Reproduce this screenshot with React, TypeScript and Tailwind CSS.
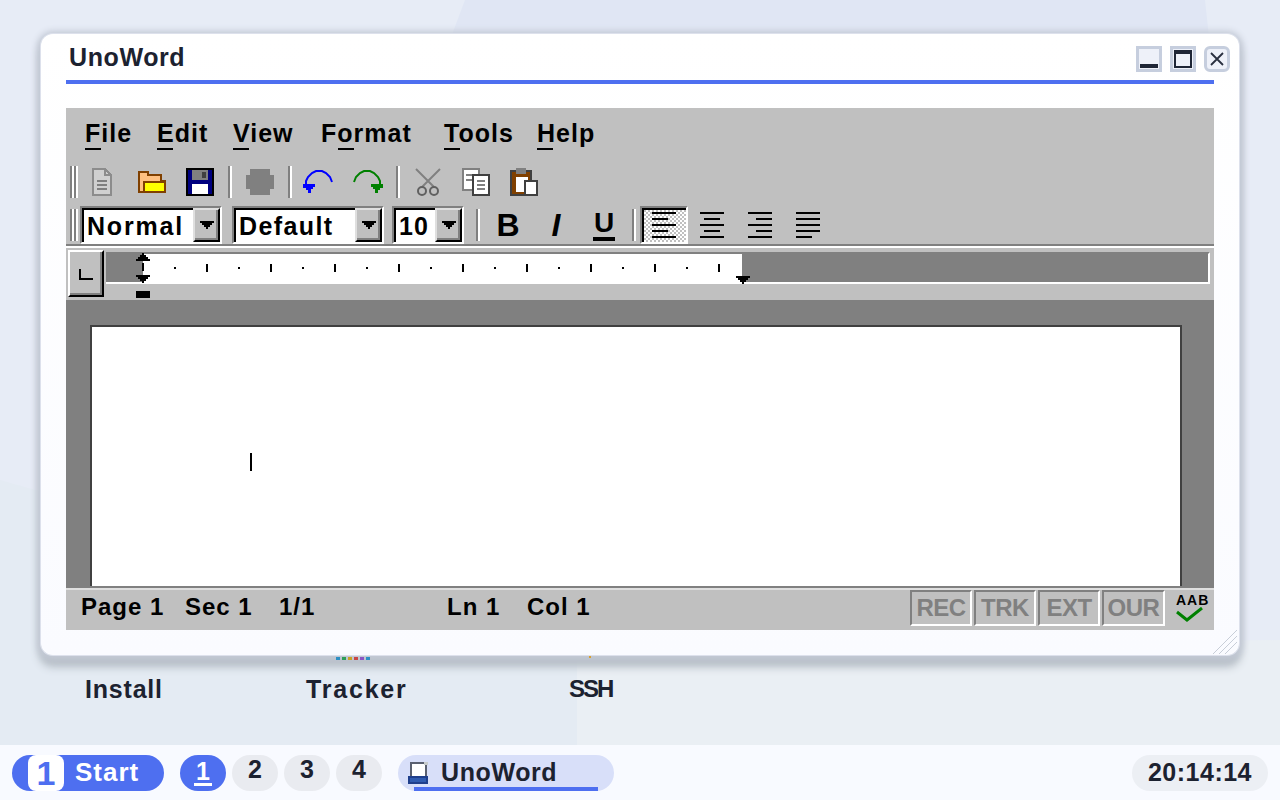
const sans = "font-['Liberation_Sans',sans-serif] font-bold";

const Grip = () => (
  <div className="flex h-[32px] w-[8px] shrink-0">
    <div className="w-[2px] bg-[#808080]" />
    <div className="w-[2px] bg-white" />
    <div className="w-[2px] bg-[#808080]" />
    <div className="w-[2px] bg-white" />
  </div>
);

const Sep = ({ className = '' }: { className?: string }) => (
  <div className={`flex h-[32px] w-[4px] shrink-0 ${className}`}>
    <div className="w-[2px] bg-[#808080]" />
    <div className="w-[2px] bg-white" />
  </div>
);

const Icon = ({ children, className = '' }: { children: React.ReactNode; className?: string }) => (
  <div className={`flex h-[36px] w-[48px] shrink-0 items-center justify-center ${className}`}>{children}</div>
);

const NewIcon = () => (
  <svg width="20" height="28" viewBox="0 0 20 28" shapeRendering="crispEdges">
    <path d="M1 1h12l6 6v20H1z" fill="#d0d0d0" stroke="#8c8c8c" strokeWidth="2" />
    <path d="M13 1v6h6" fill="none" stroke="#8c8c8c" strokeWidth="2" />
    <rect x="5" y="12" width="10" height="2" fill="#808080" />
    <rect x="5" y="16" width="10" height="2" fill="#808080" />
    <rect x="5" y="20" width="10" height="2" fill="#808080" />
  </svg>
);

const OpenIcon = () => (
  <svg width="28" height="22" viewBox="0 0 28 22" shapeRendering="crispEdges">
    <path d="M1 1h9v3h13v6h4v11H1z" fill="#ffc080" stroke="#804000" strokeWidth="2" />
    <rect x="6" y="11" width="21" height="10" fill="#ffff00" stroke="#804000" strokeWidth="2" />
  </svg>
);

const SaveIcon = () => (
  <svg width="28" height="28" viewBox="0 0 28 28" shapeRendering="crispEdges">
    <rect x="0" y="0" width="28" height="28" fill="#000" />
    <rect x="2" y="2" width="24" height="24" fill="#000080" />
    <rect x="6" y="2" width="16" height="10" fill="#808080" />
    <rect x="16" y="4" width="4" height="6" fill="#404040" />
    <rect x="6" y="16" width="16" height="10" fill="#fff" />
  </svg>
);

const PrintIcon = () => (
  <svg width="28" height="26" viewBox="0 0 28 26" shapeRendering="crispEdges">
    <path d="M4 0h20v6h4v14h-4v6H4v-6H0V6h4z" fill="#808080" />
  </svg>
);

const UndoIcon = ({ color, flip }: { color: string; flip?: boolean }) => (
  <svg width="30" height="24" viewBox="0 0 30 24" className={flip ? '-scale-x-100' : ''}>
    <path d="M29 12l-2-5-4-4-4-2h-6l-4 2-4 4-2 4v4" fill="none" stroke={color} strokeWidth="2" />
    <path d="M0 14h12v3h-2v2H8v4H5v-3H3v-2H0z" fill={color} shapeRendering="crispEdges" />
  </svg>
);

const CutIcon = () => (
  <svg width="26" height="28" viewBox="0 0 26 28" fill="none" stroke="#808080" strokeWidth="2">
    <path d="M1 1l18 18M25 1L7 19" />
    <circle cx="7" cy="23" r="4" stroke="#606060" />
    <circle cx="19" cy="23" r="4" stroke="#606060" />
  </svg>
);

const CopyIcon = () => (
  <svg width="28" height="28" viewBox="0 0 28 28" shapeRendering="crispEdges">
    <rect x="1" y="1" width="16" height="21" fill="#fff" stroke="#808080" strokeWidth="2" />
    <rect x="4" y="6" width="8" height="2" fill="#808080" />
    <rect x="4" y="11" width="8" height="2" fill="#808080" />
    <rect x="11" y="7" width="16" height="20" fill="#fff" stroke="#404040" strokeWidth="2" />
    <rect x="15" y="12" width="8" height="2" fill="#808080" />
    <rect x="15" y="16" width="8" height="2" fill="#808080" />
    <rect x="15" y="20" width="8" height="2" fill="#808080" />
  </svg>
);

const PasteIcon = () => (
  <svg width="28" height="28" viewBox="0 0 28 28" shapeRendering="crispEdges">
    <rect x="0" y="2" width="22" height="26" fill="#404040" />
    <rect x="2" y="4" width="18" height="22" fill="#804000" />
    <rect x="6" y="9" width="12" height="15" fill="#fff" />
    <rect x="6" y="0" width="10" height="6" fill="#808080" />
    <rect x="14" y="12" width="14" height="16" fill="#404040" />
    <rect x="16" y="14" width="10" height="12" fill="#fff" />
  </svg>
);

const Combo = ({ label, className, tracking }: { label: string; className: string; tracking: string }) => (
  <div className={`flex h-[38px] shrink-0 border-t-2 border-r-2 border-b-2 border-l-2 border-t-[#808080] border-r-white border-b-white border-l-[#808080] ${className}`}>
    <div className="flex min-w-0 flex-1 border-t-2 border-l-2 border-black bg-white pl-[3px]">
      <span className={`${sans} text-[25px] leading-[32px] ${tracking} whitespace-nowrap text-black`}>{label}</span>
    </div>
    <div className="flex w-[27px] shrink-0 items-center justify-center border-t-2 border-r-2 border-b-2 border-l-2 border-t-[#dfdfdf] border-r-black border-b-black border-l-[#dfdfdf] bg-[#c0c0c0] shadow-[inset_-2px_-2px_0_#808080]">
      <svg width="14" height="8" viewBox="0 0 14 8" shapeRendering="crispEdges">
        <path d="M0 0h14v2h-2v2h-2v2H8v2H6V6H4V4H2V2H0z" fill="#000" />
      </svg>
    </div>
  </div>
);

const Align = ({ lines }: { lines: [number, number][] }) => (
  <svg width="24" height="26" viewBox="0 0 24 26" shapeRendering="crispEdges">
    {lines.map(([x, w], i) => (
      <rect key={i} x={x} y={i * 6} width={w} height="2" fill="#000" />
    ))}
  </svg>
);

const Menu = ({ label, underline, w }: { label: string; underline: number; w: string }) => (
  <span className={`relative ${w} shrink-0 text-[25px] leading-[30px] tracking-[1px] text-black`}>
    {label}
    <span className="absolute top-[30px] h-[2px] w-[16px] bg-black" style={{ left: underline }} />
  </span>
);

const Cell = ({ label, w }: { label: string; w: string }) => (
  <div className={`flex h-[36px] ${w} items-center justify-center border-t-2 border-r-2 border-b-2 border-l-2 border-t-[#808080] border-r-white border-b-white border-l-[#808080] ${sans} text-[24px] tracking-[-0.5px] text-[#808080]`}>
    {label}
  </div>
);

const ticks = Array.from({ length: 18 }, (_, i) => i);

const App = () => {
  return (
    <div className="relative flex h-[800px] w-[1280px] flex-col overflow-hidden bg-[#e6ebf5]">
      {/* wallpaper */}
      <svg className="absolute inset-0" width="1280" height="800" viewBox="0 0 1280 800">
        <rect width="1280" height="800" fill="#e7ecf6" />
        <polygon points="465,0 1205,0 1240,330 1240,660 420,660 420,120" fill="#e0e6f4" />
        <polygon points="0,480 600,650 1280,680 1280,800 0,800" fill="#e4ebf3" />
        <polygon points="577,650 1280,640 1280,800 577,800" fill="#eaeff4" />
      </svg>

      <div className="relative flex-1">
        {/* desktop icon labels */}
        <div className={`absolute top-[675px] left-[85px] ${sans} text-[25px] leading-[28px] tracking-[0.8px] text-[#1c2230]`}>Install</div>
        <div className={`absolute top-[675px] left-[306px] ${sans} text-[25px] leading-[28px] tracking-[1.8px] text-[#1c2230]`}>Tracker</div>
        <div className={`absolute top-[675px] left-[569px] ${sans} text-[24px] leading-[28px] tracking-[-2px] text-[#1c2230]`}>SSH</div>

        {/* window */}
        <div className="absolute top-[34px] left-[41px] flex h-[621px] w-[1198px] flex-col rounded-[12px] bg-gradient-to-b from-white to-[#fafbff] px-[25px] shadow-[0_0_0_1px_#dde1ec,0_1px_6px_4px_#c3c9d5,0_10px_8px_2px_#b4bcc4]">
          <div className="relative h-[50px] shrink-0 border-b-4 border-[#4e6ff0] pt-[8px] pl-[3px]">
            <span className={`${sans} text-[25px] leading-[30px] tracking-[0.6px] text-[#1c2230]`}>UnoWord</span>
            <div className="absolute top-[12px] right-[-16px] flex gap-[8px]">
              <div className="flex h-[26px] w-[26px] items-end justify-center border-[3px] border-[#c6cede] bg-[#eef1f9] pb-[1px]">
                <div className="h-[4px] w-[18px] bg-[#1f2636]" />
              </div>
              <div className="flex h-[26px] w-[26px] items-center justify-center border-[3px] border-[#c6cede] bg-[#eef1f9]">
                <div className="h-[18px] w-[18px] border-2 border-t-4 border-[#1f2636]" />
              </div>
              <div className="flex h-[26px] w-[26px] items-center justify-center rounded-[6px] border-[3px] border-[#c6cede] bg-[#eef1f9]">
                <svg width="14" height="14" viewBox="0 0 14 14" stroke="#2a3040" strokeWidth="1.8"><path d="M1 1l12 12M13 1L1 13" /></svg>
              </div>
            </div>
          </div>

          <div className="mt-[24px] flex h-[522px] flex-col bg-[#c0c0c0]">
            {/* menu */}
            <div className={`flex h-[52px] shrink-0 items-start pt-[10px] pl-[19px] ${sans}`}>
              <Menu label="File" underline={0} w="w-[72px]" />
              <Menu label="Edit" underline={0} w="w-[76px]" />
              <Menu label="View" underline={0} w="w-[88px]" />
              <Menu label="Format" underline={17} w="w-[123px]" />
              <Menu label="Tools" underline={0} w="w-[93px]" />
              <Menu label="Help" underline={0} w="w-[60px]" />
            </div>

            {/* standard toolbar */}
            <div className="flex h-[44px] shrink-0 items-center pl-[4px]">
              <Grip />
              <Icon><NewIcon /></Icon>
              <Icon className="ml-[2px]"><OpenIcon /></Icon>
              <Icon><SaveIcon /></Icon>
              <Sep className="ml-[4px]" />
              <Icon className="ml-[4px]"><PrintIcon /></Icon>
              <Sep className="ml-[4px]" />
              <Icon className="ml-[2px]"><UndoIcon color="#0000ff" /></Icon>
              <Icon className="ml-[2px]"><UndoIcon color="#008000" flip /></Icon>
              <Sep className="ml-[4px]" />
              <Icon className="ml-[4px]"><CutIcon /></Icon>
              <Icon><CopyIcon /></Icon>
              <Icon><PasteIcon /></Icon>
            </div>

            {/* format toolbar */}
            <div className="mt-[2px] flex h-[38px] shrink-0 items-center pl-[4px]">
              <Grip />
              <Combo label="Normal" tracking="tracking-[1.8px]" className="ml-[2px] w-[142px]" />
              <Combo label="Default" tracking="tracking-[1.4px]" className="ml-[10px] w-[152px]" />
              <Combo label="10" tracking="tracking-[1px]" className="ml-[8px] w-[72px]" />
              <Sep className="ml-[12px]" />
              <Icon className={`ml-[4px] ${sans} text-[32px] text-black`}>B</Icon>
              <Icon className={`${sans} text-[32px] text-black italic`}>I</Icon>
              <Icon className={`${sans} text-black`}>
                <span className="border-b-[4px] border-black px-[1px] text-[28px] leading-[28px]">U</span>
              </Icon>
              <Sep className="ml-[4px]" />
              <div className="ml-[4px] flex h-[38px] w-[48px] shrink-0 items-center justify-center border-t-2 border-r-2 border-b-2 border-l-2 border-t-[#808080] border-r-white border-b-white border-l-[#808080] bg-[repeating-conic-gradient(#ffffff_0_25%,#c0c0c0_0_50%)] bg-[length:4px_4px] shadow-[inset_2px_2px_0_#000]">
                <Align lines={[[0, 24], [0, 16], [0, 24], [0, 16], [0, 24]]} />
              </div>
              <Icon><Align lines={[[0, 24], [4, 16], [0, 24], [4, 16], [0, 24]]} /></Icon>
              <Icon><Align lines={[[0, 24], [8, 16], [0, 24], [8, 16], [0, 24]]} /></Icon>
              <Icon><Align lines={[[0, 24], [0, 24], [0, 24], [0, 24], [0, 16]]} /></Icon>
            </div>

            <div className="h-[2px] shrink-0 bg-[#808080]" />
            <div className="h-[2px] shrink-0 bg-white" />

            {/* ruler */}
            <div className="relative flex h-[52px] shrink-0 pl-[2px]">
              <div className="mt-[2px] flex h-[47px] w-[36px] shrink-0 items-center justify-center border-t-2 border-r-2 border-b-2 border-l-2 border-t-white border-r-black border-b-black border-l-white shadow-[inset_-2px_-2px_0_#808080]">
                <div className="mt-[2px] h-[11px] w-[14px] border-b-2 border-l-2 border-black" />
              </div>
              <div className="mt-[4px] ml-[2px] flex h-[32px] w-[1104px] border-t-2 border-r-2 border-b-2 border-t-[#808080] border-r-white border-b-white">
                <div className="w-[37px] bg-[#808080]" />
                <div className="flex w-[599px] items-center gap-[30px] bg-white pl-[31px]">
                  {ticks.map(i => (
                    <div key={i} className={i % 2 === 0 ? 'h-[2px] w-[2px] bg-black' : 'h-[8px] w-[2px] bg-black'} />
                  ))}
                </div>
                <div className="flex-1 bg-[#808080]" />
              </div>
              {/* indent markers */}
              <svg className="absolute top-[5px] left-[70px]" width="14" height="46" viewBox="0 0 14 46" shapeRendering="crispEdges">
                <path d="M6 0h2v2h2v2h2v2h2v2H0V6h2V4h2V2h2z" fill="#000" />
                <rect x="6" y="10" width="2" height="8" fill="#000" />
                <path d="M0 22h14v2h-2v2h-2v2H8v2H6v-2H4v-2H2v-2H0z" fill="#000" />
                <rect x="0" y="38" width="14" height="7" fill="#000" />
              </svg>
              <svg className="absolute top-[28px] left-[670px]" width="14" height="8" viewBox="0 0 14 8" shapeRendering="crispEdges">
                <path d="M0 0h14v2h-2v2h-2v2H8v2H6V6H4V4H2V2H0z" fill="#000" />
              </svg>
            </div>

            {/* document */}
            <div className="flex min-h-0 flex-1 flex-col bg-[#808080] pt-[25px] pr-[32px] pl-[24px]">
              <div className="relative flex-1 border-t-2 border-r-2 border-l-2 border-[#404040] bg-white">
                <div className="absolute top-[126px] left-[158px] h-[18px] w-[2px] bg-black" />
              </div>
            </div>
            <div className="h-[2px] shrink-0 bg-[#808080]" />
            <div className="h-[2px] shrink-0 bg-[#dfdfdf]" />

            {/* status bar */}
            <div className={`flex h-[40px] shrink-0 items-start ${sans} text-[24px] tracking-[1px] text-black`}>
              <span className="mt-[3px] ml-[15px] w-[104px] leading-[28px]">Page 1</span>
              <span className="mt-[3px] w-[94px] leading-[28px]">Sec 1</span>
              <span className="mt-[3px] w-[168px] leading-[28px]">1/1</span>
              <span className="mt-[3px] w-[80px] leading-[28px]">Ln 1</span>
              <span className="mt-[3px] leading-[28px]">Col 1</span>
              <div className="ml-auto flex">
                <Cell label="REC" w="w-[62px]" />
                <Cell label="TRK" w="ml-[2px] w-[62px]" />
                <Cell label="EXT" w="ml-[2px] w-[62px]" />
                <Cell label="OUR" w="ml-[2px] w-[63px]" />
              </div>
              <div className="ml-[11px] flex w-[38px] flex-col pt-[3px]">
                <span className="text-[14px] leading-[14px] tracking-[1px]">AAB</span>
                <svg width="28" height="16" viewBox="0 0 28 16" fill="none" stroke="#008000" strokeWidth="3">
                  <path d="M1 5l10 8 15-12" />
                </svg>
              </div>
            </div>
          </div>

          {/* resize grip */}
          <svg className="absolute right-[2px] bottom-[1px]" width="24" height="24" viewBox="0 0 24 24" stroke="#c8ced8" strokeWidth="1">
            <path d="M0 24L24 0M6 24L24 6M12 24L24 12" />
          </svg>
        </div>

        {/* bits of the desktop icons peeking out below the window */}
        <div className="absolute top-[657px] left-[336px] flex gap-[2px]">
          {['#2b8fc4', '#2f9e58', '#c9a227', '#c84545', '#8a55c4', '#2b8fc4'].map((c, i) => (
            <div key={i} className="h-[3px] w-[4px]" style={{ backgroundColor: c }} />
          ))}
        </div>
        <div className="absolute top-[656px] left-[589px] h-[2px] w-[2px] bg-[#d9a030]" />
      </div>

      {/* taskbar */}
      <div className={`relative flex h-[55px] shrink-0 items-center bg-[#f8faff] px-[12px] ${sans}`}>
        <div className="flex h-[36px] w-[152px] items-center rounded-[18px] bg-[#4e6ff0] pl-[16px]">
          <div className="flex h-[36px] w-[36px] items-center justify-center rounded-[8px] bg-white text-[34px] leading-[36px] text-[#4e6ff0]">1</div>
          <span className="ml-[11px] text-[26px] tracking-[1px] text-white">Start</span>
        </div>
        <div className="ml-[16px] flex h-[36px] w-[46px] items-center justify-center rounded-[18px] bg-[#4e6ff0] text-white">
          <span className="border-b-[3px] border-white px-[2px] text-[25px] leading-[23px]">1</span>
        </div>
        <div className="ml-[6px] flex h-[36px] w-[46px] items-center justify-center rounded-[18px] bg-[#e9ebf0] pb-[6px] text-[25px] text-[#1c2230]">2</div>
        <div className="ml-[6px] flex h-[36px] w-[46px] items-center justify-center rounded-[18px] bg-[#e9ebf0] pb-[6px] text-[25px] text-[#1c2230]">3</div>
        <div className="ml-[6px] flex h-[36px] w-[46px] items-center justify-center rounded-[18px] bg-[#e9ebf0] pb-[6px] text-[25px] text-[#1c2230]">4</div>
        <div className="relative ml-[16px] flex h-[36px] w-[216px] items-center rounded-[18px] bg-[#d8dff9] pl-[10px]">
          <svg width="22" height="22" viewBox="0 0 22 22" shapeRendering="crispEdges">
            <rect x="3" y="1" width="15" height="15" fill="#fff" stroke="#5a6070" strokeWidth="2" />
            <rect x="16" y="0" width="4" height="3" fill="#c8cccc" />
            <rect x="0" y="14" width="20" height="8" fill="#1f3f8c" />
            <rect x="2" y="16" width="16" height="4" fill="#2f5bb0" />
          </svg>
          <span className="ml-[11px] text-[25px] tracking-[0.6px] text-[#1c2230]">UnoWord</span>
          <div className="absolute right-[16px] bottom-0 left-[16px] h-[4px] bg-[#4e6ff0]" />
        </div>
        <div className="ml-auto flex h-[36px] w-[136px] items-center justify-center rounded-[18px] bg-[#eceff4] text-[25px] tracking-[0.5px] text-[#1c2230]">20:14:14</div>
      </div>
    </div>
  );
};

export default App;
